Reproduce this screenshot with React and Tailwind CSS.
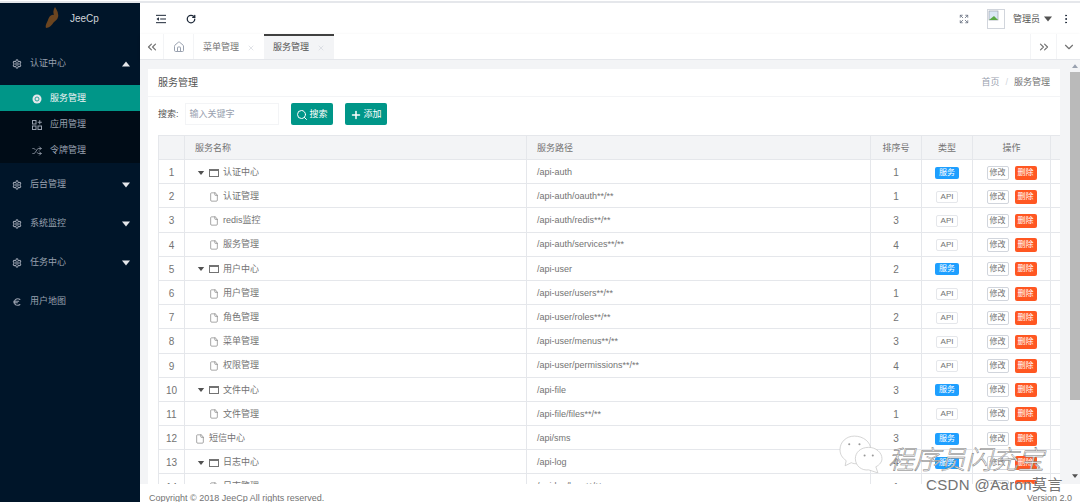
import { Settings, Euro, Shuffle, RotateCw, Expand, EllipsisVertical, ChevronsLeft, ChevronsRight, ChevronDown, House, X, Search, Plus, File } from "lucide-react";

const rows = [
  { name: "认证中心", path: "/api-auth", sort: 1, type: "group" },
  { name: "认证管理", path: "/api-auth/oauth**/**", sort: 1 },
  { name: "redis监控", path: "/api-auth/redis**/**", sort: 3 },
  { name: "服务管理", path: "/api-auth/services**/**", sort: 4 },
  { name: "用户中心", path: "/api-user", sort: 2, type: "group" },
  { name: "用户管理", path: "/api-user/users**/**", sort: 1 },
  { name: "角色管理", path: "/api-user/roles**/**", sort: 2 },
  { name: "菜单管理", path: "/api-user/menus**/**", sort: 3 },
  { name: "权限管理", path: "/api-user/permissions**/**", sort: 4 },
  { name: "文件中心", path: "/api-file", sort: 3, type: "group" },
  { name: "文件管理", path: "/api-file/files**/**", sort: 1 },
  { name: "短信中心", path: "/api/sms", sort: 3, type: "single" },
  { name: "日志中心", path: "/api-log", sort: 4, type: "group" },
  { name: "日志管理", path: "/api-log/logs**/**", sort: 1 },
];

const cols = "grid grid-cols-[27px_342px_344px_51px_51px_78px]";

function Caret({ up, className }) {
  return (
    <svg viewBox="0 0 8 5" className={className} fill="currentColor">
      <polygon points={up ? "0,5 8,5 4,0" : "0,0 8,0 4,5"} />
    </svg>
  );
}

function GlobeDot({ className }) {
  return (
    <svg viewBox="0 0 10 10" className={className}>
      <circle cx="5" cy="5" r="4.5" fill="#e5e7eb" />
      <circle cx="5" cy="5" r="2" fill="none" stroke="#009688" strokeWidth="0.8" />
    </svg>
  );
}

function AppsIcon({ className }) {
  return (
    <svg viewBox="0 0 10 10" className={className} fill="none" stroke="currentColor" strokeWidth="1">
      <rect x="0.5" y="0.5" width="3.5" height="3.5" />
      <rect x="0.5" y="6" width="3.5" height="3.5" />
      <rect x="6" y="6" width="3.5" height="3.5" />
      <path d="M7.75 0.2 V4.3 M5.7 2.25 H9.8" />
    </svg>
  );
}

function MenuFold({ className }) {
  return (
    <svg viewBox="0 0 12 10" className={className} fill="currentColor">
      <rect x="0" y="0" width="12" height="1.2" />
      <rect x="5" y="4.4" width="7" height="1.2" />
      <rect x="0" y="8.8" width="12" height="1.2" />
      <polygon points="3.5,2.8 3.5,7.2 0.5,5" />
    </svg>
  );
}

function NavItem({ label, icon: Icon = Settings, open, caret = true }) {
  return (
    <div className="flex items-center h-9.5 pt-0.5 pl-3 pr-2.5 text-gray-400">
      <Icon className="w-2.5 h-2.5 mr-2" strokeWidth={2.5} />
      <span className="flex-1">{label}</span>
      {caret && <Caret up={open} className="w-2 h-1.5 text-gray-200" />}
    </div>
  );
}

function SubItem({ label, icon: Icon, active }) {
  return (
    <div className={`flex items-center h-6.5 pt-0.5 pl-8 ${active ? "bg-[#009688] text-gray-100" : "text-gray-400"}`}>
      <Icon className="w-2.5 h-2.5 mr-2" />
      <span>{label}</span>
    </div>
  );
}

function Sidebar() {
  return (
    <aside className="w-35 shrink-0 bg-[#001529] flex flex-col">
      <div className="flex items-center h-10 pb-2.5 pl-11 gap-2">
        <svg viewBox="0 0 18 22" className="w-4.5 h-5.5 text-[#6b4520]" fill="currentColor">
          <path d="M11 0 C9 3 9 6 10 8 C7 7 5 10 4 13 C3 16 1 18 2 21 C5 21 8 18 10 15 C13 13 15 10 14 7 C14 4 12 2 11 0 Z" />
        </svg>
        <span className="text-[10px] text-gray-300">JeeCp</span>
      </div>
      <div className="flex items-center h-10 pt-0.5 pl-3 pr-2.5 text-gray-400">
        <Settings className="w-2.5 h-2.5 mr-2" strokeWidth={2.5} />
        <span className="flex-1">认证中心</span>
        <Caret up className="w-2 h-1.5 text-gray-200" />
      </div>
      <div className="mt-0.5 bg-[#000c17]">
        <SubItem label="服务管理" icon={GlobeDot} active />
        <SubItem label="应用管理" icon={AppsIcon} />
        <SubItem label="令牌管理" icon={Shuffle} />
      </div>
      <div className="mt-0.5 flex flex-col gap-px">
        <NavItem label="后台管理" />
        <NavItem label="系统监控" />
        <NavItem label="任务中心" />
        <NavItem label="用户地图" icon={Euro} caret={false} />
      </div>
    </aside>
  );
}

function Header() {
  return (
    <header className="h-[31px] shrink-0 bg-white flex items-center text-gray-800">
      <MenuFold className="w-2.5 h-2.5 ml-4" />
      <RotateCw className="w-2.5 h-2.5 ml-5" strokeWidth={3} />
      <div className="flex-1" />
      <Expand className="w-2.5 h-2.5 text-gray-500" />
      <div className="ml-4.5 w-4.5 h-5 border border-gray-300">
        <svg viewBox="0 0 12 12" className="w-3 h-3">
          <rect x="1" y="1" width="9" height="9" fill="#dbe7f5" stroke="#9ca3af" strokeWidth="0.7" />
          <path d="M1 10 L6 6 L10 10 Z" fill="#5aa845" />
        </svg>
      </div>
      <span className="ml-2 pt-0.5 text-neutral-600">管理员</span>
      <Caret className="w-2 h-1.5 ml-1 text-neutral-600" />
      <EllipsisVertical className="w-3 h-3 ml-2 mr-2" />
    </header>
  );
}

function Tabs() {
  return (
    <div className="h-6.5 shrink-0 bg-white border-b border-gray-200 shadow-sm flex text-neutral-500">
      <div className="w-6 flex items-center justify-center border-r border-gray-100">
        <ChevronsLeft className="w-3.5 h-3.5" />
      </div>
      <div className="w-7.5 flex items-center justify-center border-r border-gray-100">
        <House className="w-3 h-3 text-gray-400" />
      </div>
      <div className="w-17.5 pt-0.5 flex items-center justify-center gap-2">
        <span>菜单管理</span>
        <X className="w-2 h-2 text-gray-300" />
      </div>
      <div className="w-17.5 flex items-center justify-center gap-2 bg-gray-100 border-t-2 border-neutral-700">
        <span className="text-neutral-600">服务管理</span>
        <X className="w-2 h-2 text-gray-300" />
      </div>
      <div className="flex-1" />
      <div className="w-6.5 flex items-center justify-center border-l border-gray-100">
        <ChevronsRight className="w-3.5 h-3.5" />
      </div>
      <div className="w-6 flex items-center justify-center border-l border-gray-100">
        <ChevronDown className="w-3.5 h-3.5" />
      </div>
    </div>
  );
}

function TreeName({ row }) {
  if (row.type === "group") {
    return (
      <>
        <Caret className="w-2 h-1 ml-3 text-neutral-600" />
        <span className="ml-1 w-2.5 h-2 border border-neutral-500 border-t-2" />
        <span className="ml-1">{row.name}</span>
      </>
    );
  }
  if (row.type === "single") {
    return (
      <>
        <File className="w-2.5 h-3 ml-2.5 text-neutral-500" strokeWidth={1.5} />
        <span className="ml-1">{row.name}</span>
      </>
    );
  }
  return (
    <>
      <File className="w-2.5 h-3 ml-6 text-neutral-500" strokeWidth={1.5} />
      <span className="ml-1">{row.name}</span>
    </>
  );
}

function Row({ index, row }) {
  const isApi = row.type === undefined;
  return (
    <div className={`${cols} h-[24.2px] border-b border-gray-200 text-neutral-500`}>
      <div className="flex items-center justify-center pt-0.5 border-r border-l border-gray-200 text-[10px]">{index}</div>
      <div className="flex items-center pt-0.5 border-r border-gray-200"><TreeName row={row} /></div>
      <div className="flex items-center pt-0.5 pl-2.5 border-r border-gray-200">{row.path}</div>
      <div className="flex items-center justify-center pt-0.5 border-r border-gray-200 text-[10px]">{row.sort}</div>
      <div className="flex items-center justify-center pt-0.5 border-r border-gray-200">
        {isApi ? (
          <span className="w-5.5 h-3 flex items-center justify-center border border-gray-200 rounded-xs text-[8px]">API</span>
        ) : (
          <span className="w-6 h-3 flex items-center justify-center bg-[#1e9fff] rounded-xs text-white text-[8px]">服务</span>
        )}
      </div>
      <div className="flex items-center justify-center gap-1.5 pt-0.5 border-r border-gray-200">
        <span className="w-5.5 h-3.5 flex items-center justify-center border border-gray-300 rounded-xs text-[8px]">修改</span>
        <span className="w-5.5 h-3.5 flex items-center justify-center bg-[#ff5722] rounded-xs text-white text-[8px]">删除</span>
      </div>
    </div>
  );
}

function Card() {
  return (
    <div className="w-228 ml-2 mt-2.25 bg-white flex flex-col">
      <div className="h-7 shrink-0 border-b border-gray-100 flex items-center justify-between px-2.5 text-neutral-600">
        <span className="text-[10px]">服务管理</span>
        <span className="text-gray-400">首页<span className="mx-1.5 text-gray-300">/</span><span className="text-neutral-500">服务管理</span></span>
      </div>
      <div className="flex items-center h-9.5 pb-1 pl-2.5 text-neutral-600">
        <span className="pt-0.5">搜索:</span>
        <div className="w-23.5 h-5.5 ml-1.5 pl-1 pt-0.5 flex items-center border border-gray-100 text-gray-400">输入关键字</div>
        <button className="w-10.5 h-5.5 ml-3 pt-0.5 flex items-center justify-center gap-0.5 bg-[#009688] rounded-xs text-white">
          <Search className="w-3 h-3" />搜索
        </button>
        <button className="w-10.5 h-5.5 ml-3 pt-0.5 flex items-center justify-center gap-0.5 bg-[#009688] rounded-xs text-white">
          <Plus className="w-3 h-3" strokeWidth={3} />添加
        </button>
      </div>
      <div className="ml-2.5">
        <div className={`${cols} h-6.25 bg-gray-100 border-y border-gray-200 text-neutral-500`}>
          <div className="border-l border-r border-gray-200" />
          <div className="flex items-center pt-0.5 pl-2.5 border-r border-gray-200">服务名称</div>
          <div className="flex items-center pt-0.5 pl-2.5 border-r border-gray-200">服务路径</div>
          <div className="flex items-center justify-center pt-0.5 border-r border-gray-200">排序号</div>
          <div className="flex items-center justify-center pt-0.5 border-r border-gray-200">类型</div>
          <div className="flex items-center justify-center pt-0.5 border-r border-gray-200">操作</div>
        </div>
        {rows.map((row, i) => (
          <Row key={i} index={i + 1} row={row} />
        ))}
      </div>
    </div>
  );
}

function Scrollbar() {
  return (
    <div className="w-2.5 shrink-0 bg-gray-100 flex flex-col items-center relative">
      <Caret up className="w-1.5 h-1 mt-1 text-gray-400" />
      <div className="w-full h-82 mt-1 bg-neutral-400/70" />
      <Caret className="absolute bottom-1.5 w-1.5 h-1 text-neutral-600" />
    </div>
  );
}

function Watermark() {
  return (
    <>
      <svg viewBox="0 0 43 37" className="absolute left-[839px] top-[435px] w-11 h-9.5" fill="white" stroke="#c4c4c4" strokeWidth="0.7">
        <path d="M15 1 C7 1 1 7 1 14 C1 19 3 22 7 25 L6 30 L12 27 C14 28 16 28 18 28 C27 28 31 21 31 14 C31 7 24 1 15 1 Z" />
        <path d="M29 12 C21 12 16 17 16 23 C16 30 22 35 29 34 L38 37 L36 31 C40 29 42 26 42 23 C42 17 36 12 29 12 Z" />
        <circle cx="10" cy="9" r="1" fill="#999" stroke="none" />
        <circle cx="20" cy="9" r="1" fill="#999" stroke="none" />
        <circle cx="25" cy="20" r="1" fill="#999" stroke="none" />
        <circle cx="33" cy="20" r="1" fill="#999" stroke="none" />
      </svg>
      <span className="absolute left-[888px] top-[442px] text-[26px] leading-8 italic font-light text-white [-webkit-text-stroke:0.5px_#777] font-['Noto_Sans_CJK_SC']">程序员闪充宝</span>
      <div className="absolute left-[926px] top-[475px] text-[15px] leading-5 tracking-wide text-neutral-500">CSDN @Aaron莫言</div>
    </>
  );
}

export default function App() {
  return (
    <div className="h-screen overflow-hidden relative flex flex-col bg-white text-[9px] font-['Liberation_Sans','Noto_Sans_CJK_SC',sans-serif]">
      <div className="h-[3px] shrink-0 border-t border-white bg-gray-200" />
      <div className="flex-1 flex min-h-0">
        <Sidebar />
        <div className="flex-1 min-w-0 flex flex-col">
          <Header />
          <Tabs />
          <div className="flex-1 min-h-0 flex bg-gray-100 overflow-hidden">
            <div className="flex-1 overflow-hidden"><Card /></div>
            <Scrollbar />
          </div>
          <footer className="h-4.5 shrink-0 bg-white flex items-center justify-between pt-3 pl-2.25 pr-2 text-neutral-500">
            <span>Copyright © 2018 JeeCp All rights reserved.</span>
            <span>Version 2.0</span>
          </footer>
        </div>
      </div>
      <Watermark />
    </div>
  );
}
